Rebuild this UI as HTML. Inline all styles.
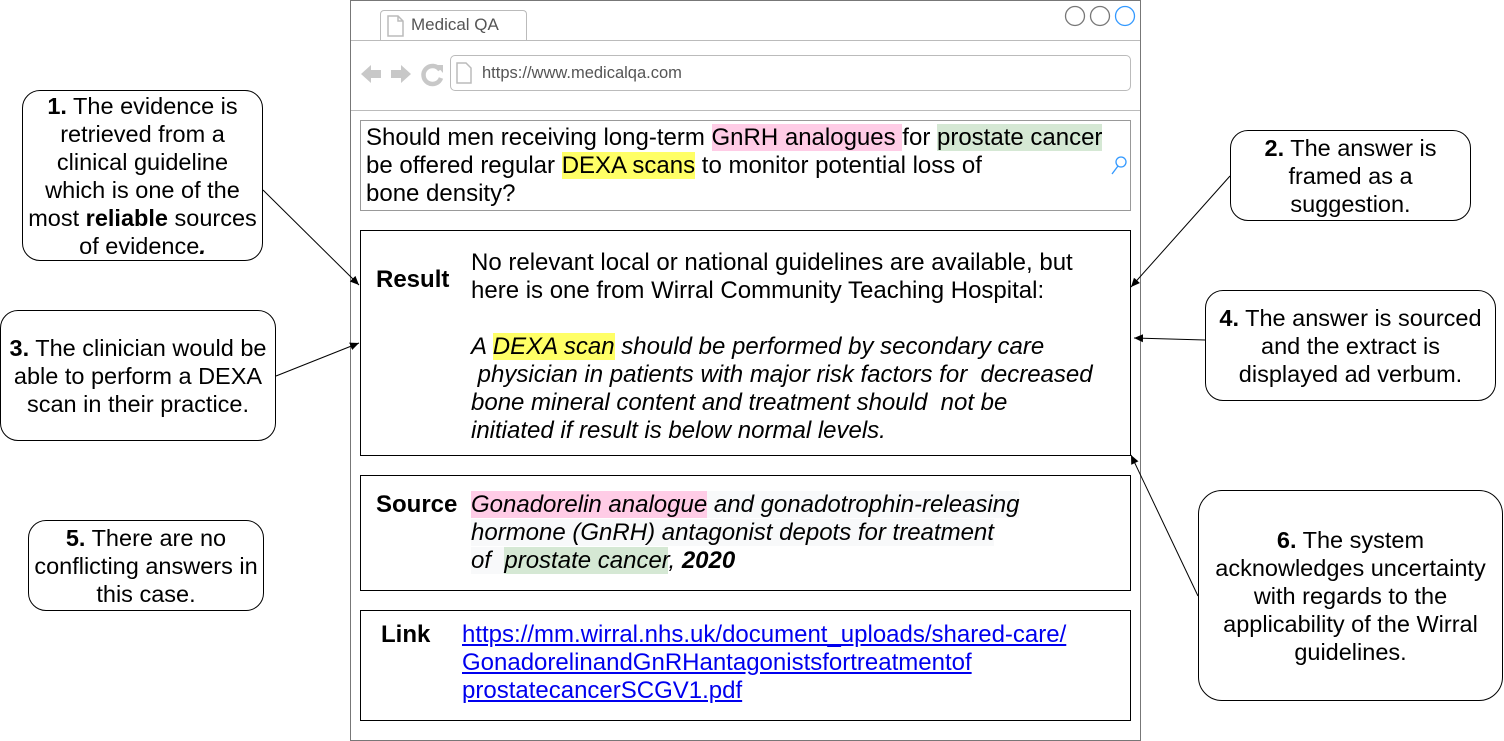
<!DOCTYPE html>
<html><head><meta charset="utf-8"><style>
body{margin:0;width:1504px;height:741px;background:#fff;font-family:"Liberation Sans",Arial,sans-serif;position:relative;overflow:hidden;color:#000}
.a{position:absolute;box-sizing:border-box}
.co{position:absolute;box-sizing:border-box;border:1px solid #000;border-radius:18px;display:flex;align-items:center;justify-content:center;text-align:center;font-size:23.5px;line-height:28px;background:#fff;white-space:nowrap}
.bx{border:1px solid #000}
.t{font-size:24px;line-height:28px;position:absolute}
.pk{background:#ffcce6}.gr{background:#d5e8d4}.ye{background:#ffff66}.gy{background:#f8f9fa}
</style></head><body>
<div class="a" style="left:350px;top:0;width:791px;height:741px;border:1px solid #777"></div>
<div class="a" style="left:380px;top:10px;width:147px;height:31px;border:1px solid #bbb;border-bottom:none;border-radius:4px 4px 0 0;background:#fff"></div>
<svg class="a" style="left:386px;top:15px" width="20" height="22"><path d="M2 1h10l5 5v15H2z" fill="#fff" stroke="#bbb" stroke-width="1.5"/><path d="M12 1v5h5" fill="none" stroke="#bbb" stroke-width="1.5"/></svg>
<div class="a" style="left:411px;top:15px;font-size:17px;color:#555">Medical QA</div>
<div class="a" style="left:351px;top:40px;width:789px;height:1px;background:#bbb"></div>
<svg class="a" style="left:1063px;top:5px" width="78" height="24"><circle cx="12" cy="11" r="9.5" fill="#fff" stroke="#777" stroke-width="1.3"/><circle cx="37" cy="11" r="9.5" fill="#fff" stroke="#777" stroke-width="1.3"/><circle cx="62" cy="11" r="9.5" fill="#fff" stroke="#3399ff" stroke-width="1.3"/></svg>
<svg class="a" style="left:360px;top:62px" width="86" height="26"><path d="M1 12L11 3v5h10v8H11v5z" fill="#c8c8c8"/><path d="M51 12L41 3v5H31v8h10v5z" fill="#c8c8c8"/><path d="M80 8a9 9 0 1 0 1 8" fill="none" stroke="#c8c8c8" stroke-width="4.5"/><path d="M76 3l7 0 0 8z" fill="#c8c8c8"/></svg>
<div class="a" style="left:450px;top:55px;width:681px;height:36px;border:1px solid #bbb;border-radius:5px"></div>
<svg class="a" style="left:455px;top:62px" width="18" height="22"><path d="M2 1h9l5 5v15H2z" fill="#fff" stroke="#bbb" stroke-width="1.5"/></svg>
<div class="a" style="left:482px;top:64px;font-size:16.5px;color:#555">https://www.medicalqa.com</div>
<div class="a" style="left:351px;top:110px;width:789px;height:1px;background:#bbb"></div>
<div class="a" style="left:360px;top:120px;width:771px;height:91px;border:1px solid #999"></div>
<div class="t" style="left:366px;top:124px;white-space:nowrap">Should men receiving long-term <span class="pk">GnRH analogues </span>for <span class="gr">prostate cancer</span><br>be offered regular <span class="ye">DEXA scans</span> to monitor potential loss of<br>bone density?</div>
<svg class="a" style="left:1110px;top:155px" width="20" height="22"><circle cx="11" cy="7" r="5" fill="none" stroke="#3399ff" stroke-width="1.3"/><path d="M8 11L2 19" stroke="#3399ff" stroke-width="1.3"/></svg>
<div class="a bx" style="left:360px;top:230px;width:771px;height:226px"></div>
<div class="t" style="left:376px;top:266px;font-weight:bold">Result</div>
<div class="t" style="left:471px;top:249px;white-space:nowrap">No relevant local or national guidelines are available, but<br>here is one from Wirral Community Teaching Hospital:<br><br><i>A <span class="ye">DEXA scan</span> should be performed by secondary care<br>&nbsp;physician in patients with major risk factors for &nbsp;decreased<br>bone mineral content and treatment should &nbsp;not be<br>initiated if result is below normal levels.</i></div>
<div class="a bx" style="left:360px;top:475px;width:771px;height:116px"></div>
<div class="t" style="left:376px;top:491px;font-weight:bold">Source</div>
<div class="t" style="left:471px;top:491px;white-space:nowrap;font-style:italic"><span class="pk">Gonadorelin analogue</span><span class="gy"> and gonadotrophin-releasing</span><br><span class="gy">hormone (GnRH) antagonist depots for treatment</span><br><span class="gy">of &nbsp;</span><span class="gr">prostate cancer</span>, <b>2020</b></div>
<div class="a bx" style="left:360px;top:610px;width:771px;height:111px"></div>
<div class="t" style="left:381px;top:621px;font-weight:bold">Link</div>
<div class="t" style="left:462px;top:621px;white-space:nowrap;color:#0000ee;text-decoration:underline">https://mm.wirral.nhs.uk/document_uploads/shared-care/<br>GonadorelinandGnRHantagonistsfortreatmentof<br>prostatecancerSCGV1.pdf</div>
<div class="co" style="left:22px;top:90px;width:241px;height:171px"><div><b>1.</b> The evidence is<br>retrieved from a<br>clinical guideline<br>which is one of the<br>most <b>reliable</b> sources<br>of evidence<b><i>.</i></b></div></div>
<div class="co" style="left:1230px;top:130px;width:241px;height:91px"><div><b>2.</b> The answer is<br>framed as a<br>suggestion.</div></div>
<div class="co" style="left:0px;top:310px;width:276px;height:131px"><div><b>3.</b> The clinician would be<br>able to perform a DEXA<br>scan in their practice.</div></div>
<div class="co" style="left:1205px;top:290px;width:291px;height:111px"><div><b>4.</b> The answer is sourced<br>and the extract is<br>displayed ad verbum.</div></div>
<div class="co" style="left:28px;top:520px;width:236px;height:91px"><div><b>5.</b> There are no<br>conflicting answers in<br>this case.</div></div>
<div class="co" style="left:1198px;top:490px;width:305px;height:211px;border-radius:24px"><div><b>6.</b> The system<br>acknowledges uncertainty<br>with regards to the<br>applicability of the Wirral<br>guidelines.</div></div>
<svg class="a" style="left:0;top:0" width="1504" height="741">
<defs><marker id="m" markerWidth="10" markerHeight="10" refX="9" refY="5" orient="auto" markerUnits="userSpaceOnUse"><path d="M0 1L9 5 0 9z" fill="#000"/></marker></defs>
<g stroke="#000" stroke-width="1" marker-end="url(#m)">
<line x1="263" y1="190" x2="359" y2="285"/>
<line x1="1230" y1="176" x2="1131" y2="287"/>
<line x1="276" y1="376" x2="359" y2="343"/>
<line x1="1205" y1="340" x2="1134" y2="338"/>
<line x1="1198" y1="596" x2="1131" y2="455"/>
</g></svg>
</body></html>
